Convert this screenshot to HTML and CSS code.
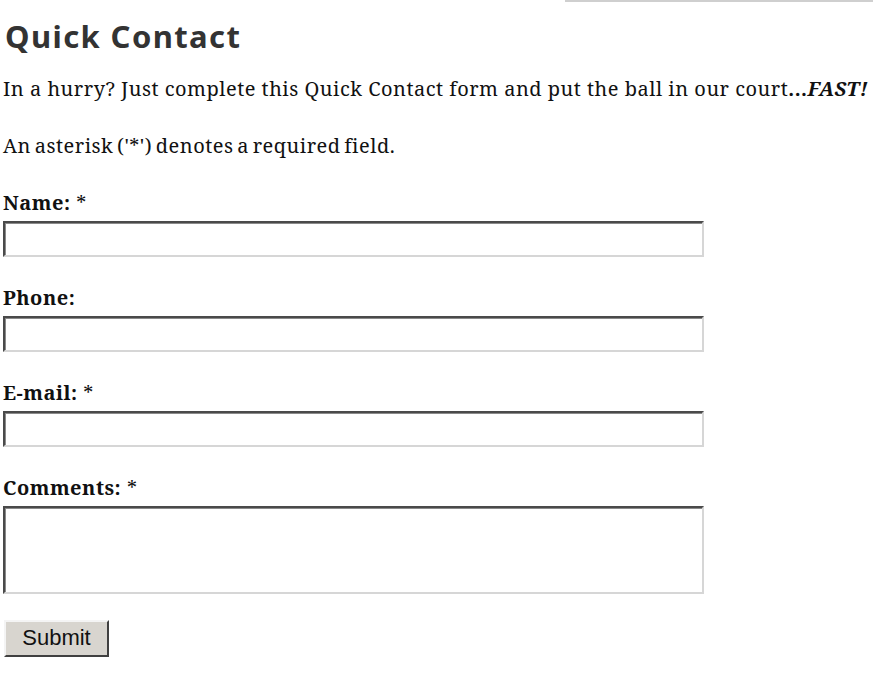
FILE: index.html
```html
<!DOCTYPE html>
<html lang="en">
<head>
<meta charset="utf-8">
<title>Quick Contact</title>
<link rel="stylesheet" href="styles.css">
</head>
<body>
<div class="page">
  <div class="topline"></div>
  <h2 class="title">Quick Contact</h2>
  <p class="text">In a hurry? Just complete this Quick Contact form and put the ball in our court<strong class="fast">...<em>FAST!</em></strong></p>
  <p class="text">An asterisk ('*') denotes a required field.</p>
  <form class="form">
    <div class="field">
      <label class="label"><strong>Name:</strong> *</label>
      <input class="input" type="text">
    </div>
    <div class="field">
      <label class="label"><strong>Phone:</strong></label>
      <input class="input" type="text">
    </div>
    <div class="field">
      <label class="label"><strong>E-mail:</strong> *</label>
      <input class="input" type="text">
    </div>
    <div class="field">
      <label class="label"><strong>Comments:</strong> *</label>
      <textarea class="input area"></textarea>
    </div>
    <button class="submit" type="button">Submit</button>
  </form>
</div>
</body>
</html>
```

FILE: styles.css
```css
html, body {
  margin: 0;
  padding: 0;
  background: #ffffff;
}

.page {
  padding: 0 0 0 3px;
  font-family: "Noto Serif", "DejaVu Serif", serif;
  font-size: 20px;
  letter-spacing: 0.5px;
  color: #111111;
}

.topline {
  margin-left: 562px;
  width: 308px;
  height: 2px;
  background: #cfcfcf;
}

.title {
  margin: 14px 0 0 2px;
  font-family: "Noto Sans", "Open Sans", sans-serif;
  font-weight: 700;
  font-size: 31px;
  letter-spacing: 1.4px;
  line-height: 40px;
  color: #333333;
}

.text {
  margin: 21px 0 0;
  line-height: 24px;
}

.text + .text {
  margin-top: 33px;
  word-spacing: -2px;
}

.fast em {
  font-style: italic;
}

.form {
  display: flex;
  flex-direction: column;
  align-items: flex-start;
  margin-top: 33px;
}

.field {
  display: flex;
  flex-direction: column;
  align-items: flex-start;
  gap: 6px;
  margin-bottom: 29px;
}

.label {
  display: block;
  line-height: 24px;
}

.input {
  box-sizing: border-box;
  width: 701px;
  height: 36px;
  margin: 0;
  padding: 2px 4px;
  background: #ffffff;
  border-top: 2px solid #4a4a4a;
  border-left: 2px solid #4a4a4a;
  border-right: 2px solid #d6d6d6;
  border-bottom: 2px solid #d6d6d6;
  box-shadow: inset 1px 1px 0 #8a8a8a;
  font-family: "DejaVu Serif", serif;
  font-size: 16px;
}

.area {
  height: 88px;
  resize: none;
}

.field:last-of-type {
  margin-bottom: 26px;
}

.submit {
  box-sizing: border-box;
  width: 105px;
  height: 37px;
  margin-left: 1px;
  padding: 0 0 2px;
  background: #d8d5cf;
  border-top: 2px solid #f4f4f4;
  border-left: 2px solid #f4f4f4;
  border-right: 2px solid #404040;
  border-bottom: 2px solid #404040;
  font-family: "Liberation Sans", Arial, sans-serif;
  font-size: 22px;
  letter-spacing: 0;
  color: #111111;
}
```
